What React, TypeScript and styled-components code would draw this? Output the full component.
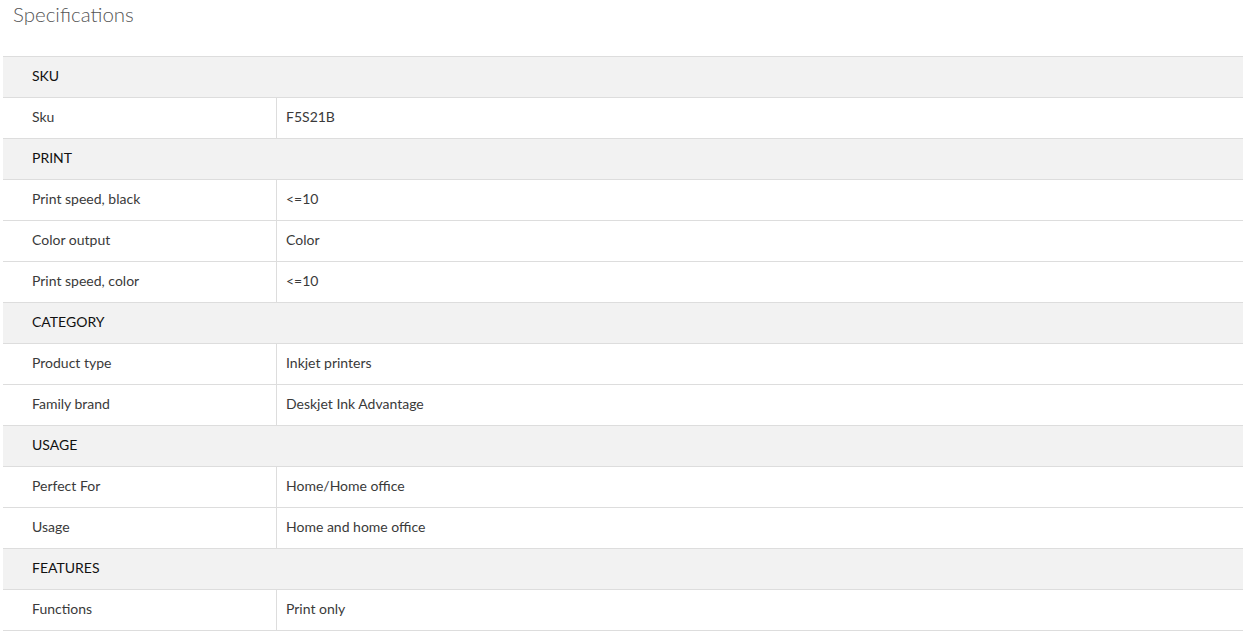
import React from "react";
import styled, { createGlobalStyle } from "styled-components";

const Global = createGlobalStyle`
  html, body { margin: 0; padding: 0; background: #fff; }
  body { font-family: Lato, "Open Sans", sans-serif; }
`;

const Page = styled.div`
  padding: 0 4px 0 3px;
`;

const Title = styled.h2`
  margin: 0;
  padding: 2px 0 0 10px;
  height: 56px;
  box-sizing: border-box;
  font-size: 20.5px;
  font-weight: 300;
  color: #555;
`;

const Table = styled.div`
  border-top: 1px solid #ddd;
  display: flex;
  flex-direction: column;
`;

const GroupRow = styled.div`
  height: 41px;
  box-sizing: border-box;
  padding: 0 0 4px 29px;
  border-bottom: 1px solid #ddd;
  background: #f2f2f2;
  display: flex;
  align-items: center;
  font-size: 14px;
  color: #111;
`;

const Row = styled.div`
  height: 41px;
  box-sizing: border-box;
  border-bottom: 1px solid #ddd;
  display: grid;
  grid-template-columns: 274px 1fr;
  font-size: 14px;
  color: #3a3a3a;
`;

const Cell = styled.div<{ $divider?: boolean }>`
  display: flex;
  align-items: center;
  padding-bottom: 4px;
  padding-left: ${(p) => (p.$divider ? "29px" : "9px")};
  border-right: ${(p) => (p.$divider ? "1px solid #ddd" : "none")};
`;

const data: { group: string; rows: [string, string][] }[] = [
  { group: "SKU", rows: [["Sku", "F5S21B"]] },
  {
    group: "PRINT",
    rows: [
      ["Print speed, black", "<=10"],
      ["Color output", "Color"],
      ["Print speed, color", "<=10"],
    ],
  },
  {
    group: "CATEGORY",
    rows: [
      ["Product type", "Inkjet printers"],
      ["Family brand", "Deskjet Ink Advantage"],
    ],
  },
  {
    group: "USAGE",
    rows: [
      ["Perfect For", "Home/Home office"],
      ["Usage", "Home and home office"],
    ],
  },
  { group: "FEATURES", rows: [["Functions", "Print only"]] },
];

export default function App() {
  return (
    <>
      <Global />
      <Page>
        <Title>Specifications</Title>
        <Table>
          {data.map((g) => (
            <React.Fragment key={g.group}>
              <GroupRow>{g.group}</GroupRow>
              {g.rows.map(([k, v]) => (
                <Row key={k}>
                  <Cell $divider>{k}</Cell>
                  <Cell>{v}</Cell>
                </Row>
              ))}
            </React.Fragment>
          ))}
        </Table>
      </Page>
    </>
  );
}
